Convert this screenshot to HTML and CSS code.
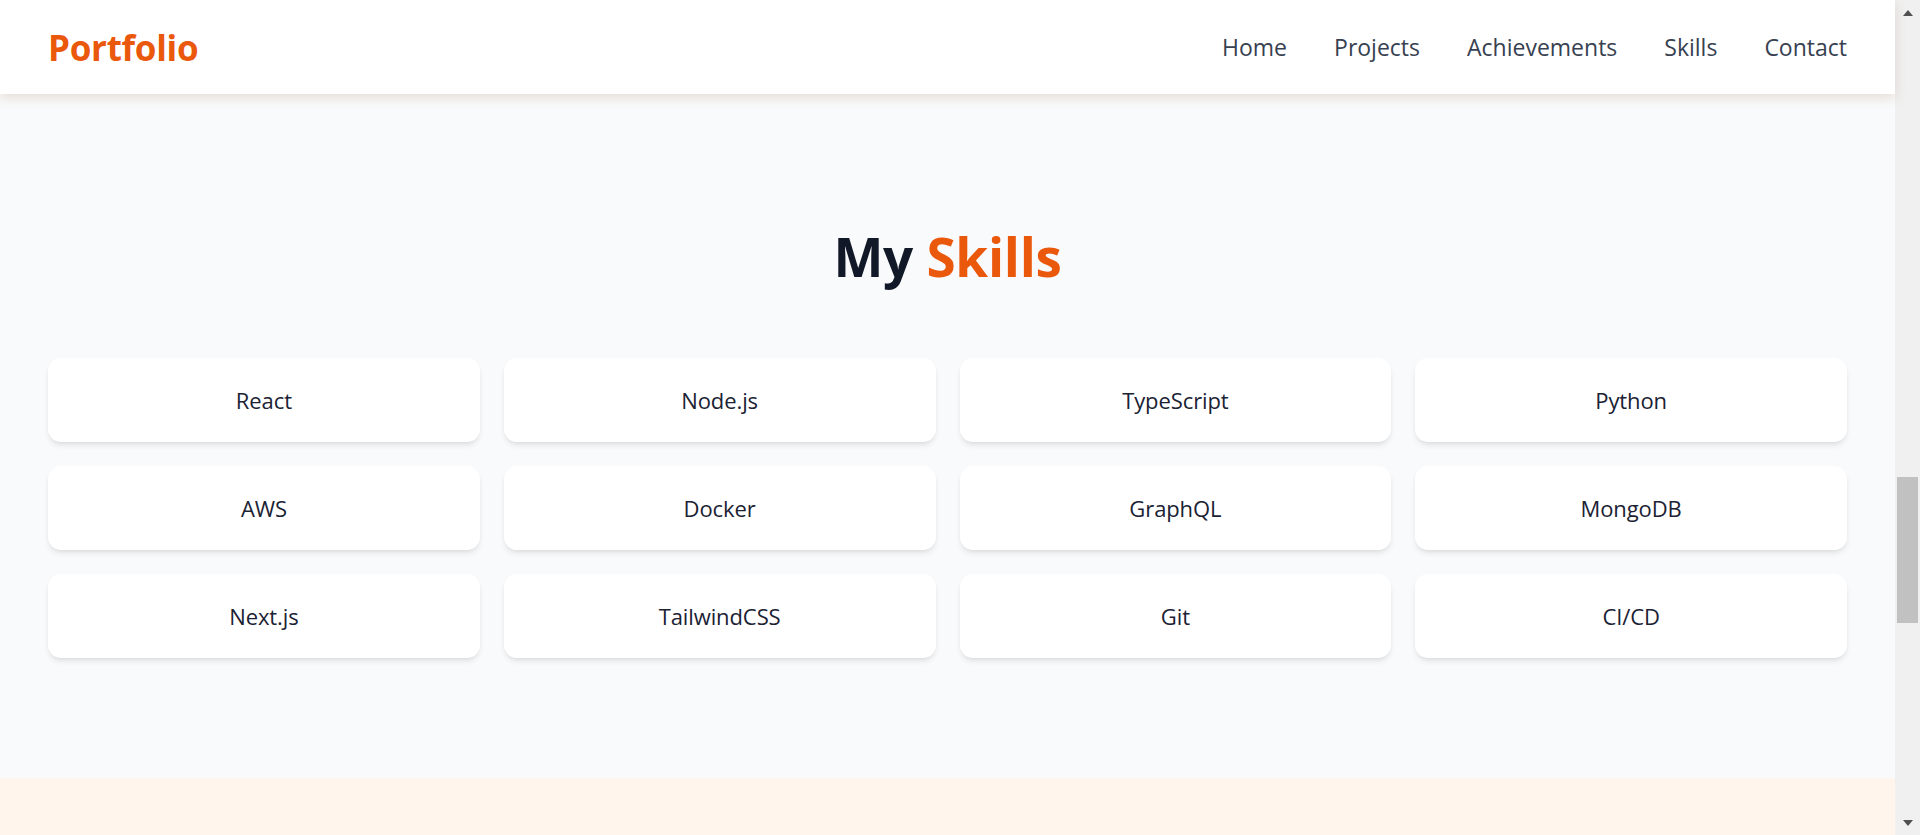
FILE: index.html
```html
<!DOCTYPE html>
<html lang="en">
<head>
<meta charset="utf-8">
<title>Portfolio</title>
<link rel="stylesheet" href="styles.css">
</head>
<body>
<div class="page">
  <div class="main">
    <nav class="nav">
      <div class="logo">Portfolio</div>
      <ul class="links">
        <li>Home</li>
        <li>Projects</li>
        <li>Achievements</li>
        <li>Skills</li>
        <li>Contact</li>
      </ul>
    </nav>
    <section class="skills">
      <h2 class="title">My <span class="accent">Skills</span></h2>
      <div class="grid">
        <div class="card">React</div>
        <div class="card">Node.js</div>
        <div class="card">TypeScript</div>
        <div class="card">Python</div>
        <div class="card">AWS</div>
        <div class="card">Docker</div>
        <div class="card">GraphQL</div>
        <div class="card">MongoDB</div>
        <div class="card">Next.js</div>
        <div class="card">TailwindCSS</div>
        <div class="card">Git</div>
        <div class="card">CI/CD</div>
      </div>
    </section>
    <section class="next"></section>
  </div>
  <div class="scrollbar">
    <div class="arrow up"></div>
    <div class="track">
      <div class="track-space top"></div>
      <div class="thumb"></div>
      <div class="track-space bottom"></div>
    </div>
    <div class="arrow down"></div>
  </div>
</div>
</body>
</html>
```
FILE: styles.css
```css
* { box-sizing: border-box; }
html, body {
  margin: 0;
  padding: 0;
  height: 835px;
  overflow: hidden;
}
body {
  font-family: "Open Sans", "Noto Sans", sans-serif;
  background: #f9fafb;
}
.page {
  display: flex;
  height: 835px;
}
.main {
  flex: 1;
  display: flex;
  flex-direction: column;
  min-width: 0;
}
.nav {
  height: 94px;
  flex: none;
  background: #ffffff;
  display: flex;
  align-items: center;
  justify-content: space-between;
  padding: 0 48px;
  position: relative;
  z-index: 2;
  box-shadow: 0 4px 11px rgba(140, 95, 50, 0.18);
}
.logo {
  font-size: 35px;
  font-weight: 700;
  color: #ea580c;
  line-height: 1;
  letter-spacing: -0.3px;
}
.links {
  list-style: none;
  margin: 0;
  padding: 0;
  display: flex;
  gap: 47px;
}
.links li {
  font-size: 23px;
  color: #374151;
  line-height: 1;
  letter-spacing: 0;
}
.skills {
  flex: none;
  height: 684px;
  background: #f9fafb;
  padding: 131px 48px 0;
}
.title {
  margin: 0;
  text-align: center;
  font-size: 53px;
  line-height: 1.2;
  font-weight: 700;
  color: #111827;
  letter-spacing: -0.3px;
}
.accent { color: #ea580c; }
.grid {
  margin-top: 69px;
  display: grid;
  grid-template-columns: repeat(4, 1fr);
  gap: 24px;
}
.card {
  height: 84px;
  background: #ffffff;
  border-radius: 13px;
  box-shadow: 0 4px 6px -1px rgba(0, 0, 0, 0.09), 0 2px 4px -2px rgba(0, 0, 0, 0.08);
  display: flex;
  align-items: center;
  justify-content: center;
  font-size: 22px;
  color: #1a2233;
  letter-spacing: -0.1px;
}
.next {
  flex: 1;
  background: #fff5ec;
}
.scrollbar {
  width: 25px;
  flex: none;
  background: #f0f0f0;
  display: flex;
  flex-direction: column;
  align-items: center;
}
.arrow {
  height: 25px;
  flex: none;
  width: 100%;
  display: flex;
  align-items: center;
  justify-content: center;
}
.arrow::before {
  content: "";
  width: 0;
  height: 0;
  border-left: 5px solid transparent;
  border-right: 5px solid transparent;
}
.up::before { border-bottom: 6px solid #505050; }
.down::before { border-top: 6px solid #505050; }
.track {
  flex: 1;
  width: 100%;
  display: flex;
  flex-direction: column;
  align-items: center;
}
.track-space.top { height: 452px; }
.thumb {
  width: 21px;
  height: 146px;
  background: #c1c1c1;
}
.track-space.bottom { flex: 1; }
```
